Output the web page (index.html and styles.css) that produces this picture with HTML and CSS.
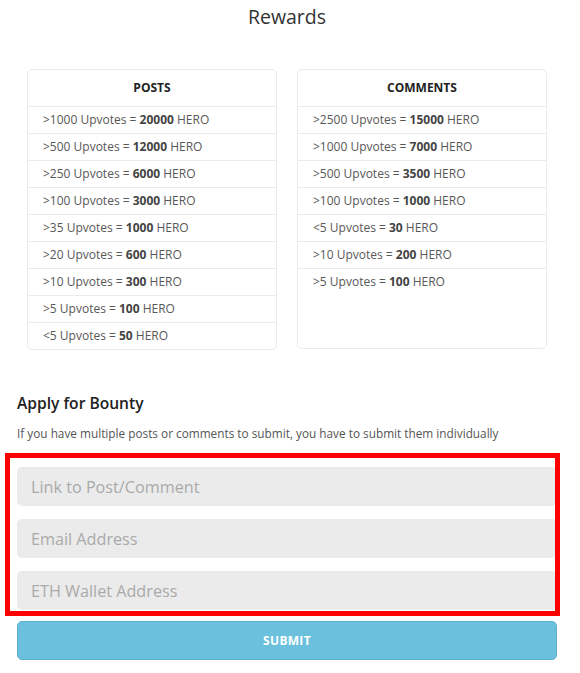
FILE: index.html
```html
<!DOCTYPE html>
<html lang="en">
<head>
    <meta charset="UTF-8">
    <title>Rewards</title>
    <link rel="stylesheet" href="styles.css">
</head>
<body>
    <div class="page">
        <h2 class="title">Rewards</h2>

        <div class="tables">
            <div class="card">
                <div class="card-head">POSTS</div>
                <ul class="rows">
                    <li>&gt;1000 Upvotes = <b>20000</b> HERO</li>
                    <li>&gt;500 Upvotes = <b>12000</b> HERO</li>
                    <li>&gt;250 Upvotes = <b>6000</b> HERO</li>
                    <li>&gt;100 Upvotes = <b>3000</b> HERO</li>
                    <li>&gt;35 Upvotes = <b>1000</b> HERO</li>
                    <li>&gt;20 Upvotes = <b>600</b> HERO</li>
                    <li>&gt;10 Upvotes = <b>300</b> HERO</li>
                    <li>&gt;5 Upvotes = <b>100</b> HERO</li>
                    <li>&lt;5 Upvotes = <b>50</b> HERO</li>
                </ul>
            </div>
            <div class="card">
                <div class="card-head">COMMENTS</div>
                <ul class="rows">
                    <li>&gt;2500 Upvotes = <b>15000</b> HERO</li>
                    <li>&gt;1000 Upvotes = <b>7000</b> HERO</li>
                    <li>&gt;500 Upvotes = <b>3500</b> HERO</li>
                    <li>&gt;100 Upvotes = <b>1000</b> HERO</li>
                    <li>&lt;5 Upvotes = <b>30</b> HERO</li>
                    <li>&gt;10 Upvotes = <b>200</b> HERO</li>
                    <li>&gt;5 Upvotes = <b>100</b> HERO</li>
                </ul>
            </div>
        </div>

        <h3 class="apply-title">Apply for Bounty</h3>
        <p class="apply-note">If you have multiple posts or comments to submit, you have to submit them individually</p>

        <form class="bounty-form">
            <div class="fields">
                <input type="text" placeholder="Link to Post/Comment">
                <input type="text" placeholder="Email Address">
                <input type="text" placeholder="ETH Wallet Address">
                <div class="highlight"></div>
            </div>
            <button type="button" class="submit">SUBMIT</button>
        </form>
    </div>
</body>
</html>
```

FILE: styles.css
```css
body {
    margin: 0;
    font-family: "Open Sans", "Liberation Sans", Arial, sans-serif;
    color: #555;
    background: #fff;
}
.page {
    width: 540px;
    padding: 0 23px 0 17px;
}
.title {
    margin: 0;
    padding-top: 3px;
    font-size: 19.5px;
    font-weight: 400;
    line-height: 27px;
    color: #333;
    text-align: center;
}
.tables {
    display: grid;
    grid-template-columns: 1fr 1fr;
    gap: 20px;
    padding: 0 10px;
    margin-top: 39px;
}
.card {
    border: 1px solid #ebebeb;
    border-radius: 5px;
    align-self: start;
    min-height: 278px;
}
.card-head {
    height: 36px;
    line-height: 36px;
    text-align: center;
    font-size: 12px;
    font-weight: 700;
    color: #222;
    border-bottom: 1px solid #ebebeb;
}
.rows {
    list-style: none;
    margin: 0;
    padding: 0;
}
.rows li {
    height: 26px;
    line-height: 26px;
    padding-left: 15px;
    font-size: 12px;
    color: #585858;
    border-bottom: 1px solid #ebebeb;
}
.rows li:last-child {
    border-bottom: none;
}
.rows b {
    color: #444;
}
.apply-title {
    margin: 43px 0 0;
    font-size: 15.6px;
    font-weight: 600;
    line-height: 20px;
    color: #222;
}
.apply-note {
    margin: 13px 0 0;
    font-size: 11.8px;
    line-height: 15px;
    color: #555;
}
.bounty-form {
    margin-top: 26px;
}
.fields {
    position: relative;
    display: flex;
    flex-direction: column;
    gap: 13px;
}
.fields input {
    height: 39px;
    box-sizing: border-box;
    border: none;
    border-radius: 5px;
    background: #ebebeb;
    padding: 0 14px;
    font-family: inherit;
    font-size: 16.2px;
    color: #555;
}
.fields input::placeholder {
    color: #aaa;
}
/* red annotation frame drawn over the inputs */
.highlight {
    position: absolute;
    top: -14px;
    left: -12px;
    right: -3px;
    bottom: -6px;
    border: 5px solid #f00;
    pointer-events: none;
}
.submit {
    display: block;
    width: 100%;
    height: 39px;
    margin-top: 11px;
    border: 1px solid #5aaed0;
    border-radius: 5px;
    background: #6bc1dd;
    color: #fff;
    font-family: inherit;
    font-size: 12px;
    font-weight: 700;
    letter-spacing: 0.3px;
}
```
